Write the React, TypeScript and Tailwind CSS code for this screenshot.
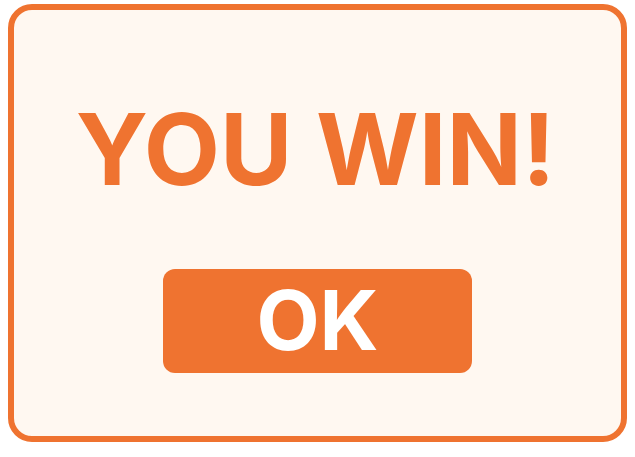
import React from "react"

export default function App() {
  return (
    <div className="w-[635px] h-[457px] bg-white pl-[8px] pt-[4px]">
      <div className="w-[619px] h-[438px] rounded-[24px] border-[6px] border-[#ef7330] bg-[#fff8f1] flex flex-col items-center pt-[90px] font-['Inter',sans-serif]">
        {/* Title */}
        <h1 className="text-[99px] leading-none font-bold text-[#ef7330] ml-[-4px]">
          YOU WIN!
        </h1>

        {/* Action */}
        <button className="mt-[70px] w-[309px] h-[104px] rounded-[12px] bg-[#ef7330] flex items-center justify-center text-white text-[82px] leading-none font-bold">
          OK
        </button>
      </div>
    </div>
  )
}
